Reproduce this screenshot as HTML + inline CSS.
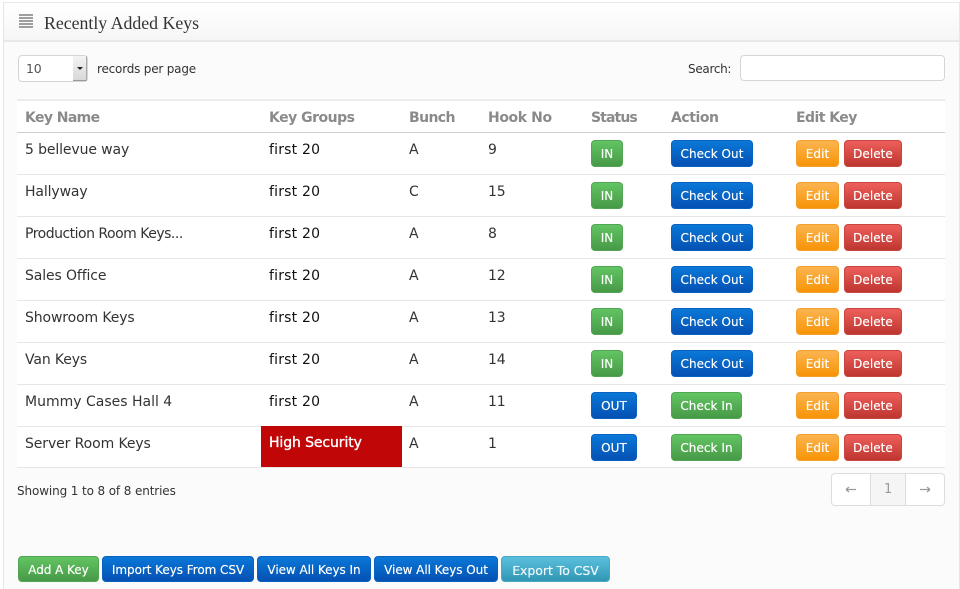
<!DOCTYPE html>
<html><head><meta charset="utf-8"><style>
*{box-sizing:border-box}
html,body{margin:0;padding:0}
body{width:960px;height:589px;overflow:hidden;background:#fff;position:relative;font-family:"DejaVu Sans","Liberation Sans",sans-serif;color:#333}
.a{position:absolute;white-space:nowrap}
.panel{left:3px;top:2px;width:957px;height:587px;background:#fbfbfb;border-left:1px solid #e6e6e6;border-right:1px solid #e6e6e6;border-top:1px solid #e8e8e8}
.head{left:4px;top:3px;width:955px;height:39px;background:linear-gradient(#fff,#f6f6f6);border-bottom:2px solid #e8e8e8}
.title{left:44px;top:12px;font:17.8px/22px "Liberation Serif",serif;color:#333}
.ico{left:19px;top:14px;width:14px;height:14px}
.tbl{left:17px;top:99px;width:928px;height:369px;background:#fff;border-top:2px solid #ececec}
.line{left:17px;width:928px;height:1px;background:#e6e6e6}
.th{top:109px;font-size:14px;line-height:18px;font-weight:bold;color:#8a8a8a;letter-spacing:-.5px}
.td{font-size:14px;line-height:18px;color:#333;letter-spacing:-.12px}
.k{color:#111;letter-spacing:.2px}
.b{height:27px;border-radius:4px;color:#fff;font-size:12px;line-height:26px;text-align:center;text-shadow:0 0 .4px #fff;letter-spacing:.05px}
.s{height:26px;line-height:27px;letter-spacing:-.05px}
.g{background:linear-gradient(#62c462,#479a47);border:1px solid #52a552}
.u{background:linear-gradient(#0a78d8,#0451b3);border:1px solid #0a62c0}
.o{background:linear-gradient(#fbb450,#f89406);border:1px solid #f2a02c}
.r{background:linear-gradient(#ee5f5b,#bd362f);border:1px solid #c9453f}
.t{background:linear-gradient(#5bc0de,#2f96b4);border:1px solid #4aa8c6}
.small{font-size:12px;line-height:16px;color:#333;letter-spacing:-.2px}
</style></head><body>
<div class="a panel"></div>
<div class="a head"></div>
<svg class="a ico" viewBox="0 0 14 14"><path d="M0 1H14M0 4H14M0 7H14M0 10H14M0 13H14" stroke="#808080" stroke-width="1.6" fill="none"/></svg>
<div class="a title">Recently Added Keys</div>

<div class="a" style="left:18px;top:55px;width:70px;height:27px;background:#fff;border:1px solid #d5d5d5;border-radius:4px"></div>
<div class="a" style="left:73px;top:56px;width:14px;height:25px;background:linear-gradient(#f4f4f4,#d8d8d8);border-right:1px solid #aaa;border-bottom:1px solid #999"></div>
<div class="a" style="left:77px;top:67px;width:0;height:0;border-left:3px solid transparent;border-right:3px solid transparent;border-top:3px solid #222"></div>
<div class="a small" style="left:26px;top:61px;color:#555;font-size:12.5px">10</div>
<div class="a small" style="left:97px;top:61px">records per page</div>
<div class="a small" style="left:688px;top:61px;letter-spacing:-.3px">Search:</div>
<div class="a" style="left:740px;top:55px;width:205px;height:26px;background:#fff;border:1px solid #d5d5d5;border-radius:4px"></div>

<div class="a tbl"></div>
<div class="a line" style="top:132px;background:#d0d0d0"></div>
<div class="a line" style="top:174px"></div>
<div class="a line" style="top:216px"></div>
<div class="a line" style="top:258px"></div>
<div class="a line" style="top:300px"></div>
<div class="a line" style="top:342px"></div>
<div class="a line" style="top:384px"></div>
<div class="a line" style="top:426px"></div>
<div class="a line" style="top:467px"></div>

<div class="a th" style="left:25px;letter-spacing:-.6px">Key Name</div>
<div class="a th" style="left:269px">Key Groups</div>
<div class="a th" style="left:409px;letter-spacing:-.6px">Bunch</div>
<div class="a th" style="left:488px;letter-spacing:-.4px">Hook No</div>
<div class="a th" style="left:591px;letter-spacing:-.9px">Status</div>
<div class="a th" style="left:671px;letter-spacing:-.45px">Action</div>
<div class="a th" style="left:796px;letter-spacing:-.55px">Edit Key</div>

<div class="a td" style="left:25px;top:141px">5 bellevue way</div><div class="a td k" style="left:269px;top:141px">first 20</div><div class="a td" style="left:409px;top:141px">A</div><div class="a td" style="left:488px;top:141px">9</div>
<div class="a b g" style="left:591px;top:140px;width:32px">IN</div><div class="a b u" style="left:671px;top:140px;width:82px">Check Out</div><div class="a b o" style="left:796px;top:140px;width:43px">Edit</div><div class="a b r" style="left:844px;top:140px;width:58px">Delete</div>

<div class="a td" style="left:25px;top:183px">Hallyway</div><div class="a td k" style="left:269px;top:183px">first 20</div><div class="a td" style="left:409px;top:183px">C</div><div class="a td" style="left:488px;top:183px">15</div>
<div class="a b g" style="left:591px;top:182px;width:32px">IN</div><div class="a b u" style="left:671px;top:182px;width:82px">Check Out</div><div class="a b o" style="left:796px;top:182px;width:43px">Edit</div><div class="a b r" style="left:844px;top:182px;width:58px">Delete</div>

<div class="a td" style="left:25px;top:225px;letter-spacing:-.5px">Production Room Keys...</div><div class="a td k" style="left:269px;top:225px">first 20</div><div class="a td" style="left:409px;top:225px">A</div><div class="a td" style="left:488px;top:225px">8</div>
<div class="a b g" style="left:591px;top:224px;width:32px">IN</div><div class="a b u" style="left:671px;top:224px;width:82px">Check Out</div><div class="a b o" style="left:796px;top:224px;width:43px">Edit</div><div class="a b r" style="left:844px;top:224px;width:58px">Delete</div>

<div class="a td" style="left:25px;top:267px">Sales Office</div><div class="a td k" style="left:269px;top:267px">first 20</div><div class="a td" style="left:409px;top:267px">A</div><div class="a td" style="left:488px;top:267px">12</div>
<div class="a b g" style="left:591px;top:266px;width:32px">IN</div><div class="a b u" style="left:671px;top:266px;width:82px">Check Out</div><div class="a b o" style="left:796px;top:266px;width:43px">Edit</div><div class="a b r" style="left:844px;top:266px;width:58px">Delete</div>

<div class="a td" style="left:25px;top:309px">Showroom Keys</div><div class="a td k" style="left:269px;top:309px">first 20</div><div class="a td" style="left:409px;top:309px">A</div><div class="a td" style="left:488px;top:309px">13</div>
<div class="a b g" style="left:591px;top:308px;width:32px">IN</div><div class="a b u" style="left:671px;top:308px;width:82px">Check Out</div><div class="a b o" style="left:796px;top:308px;width:43px">Edit</div><div class="a b r" style="left:844px;top:308px;width:58px">Delete</div>

<div class="a td" style="left:25px;top:351px">Van Keys</div><div class="a td k" style="left:269px;top:351px">first 20</div><div class="a td" style="left:409px;top:351px">A</div><div class="a td" style="left:488px;top:351px">14</div>
<div class="a b g" style="left:591px;top:350px;width:32px">IN</div><div class="a b u" style="left:671px;top:350px;width:82px">Check Out</div><div class="a b o" style="left:796px;top:350px;width:43px">Edit</div><div class="a b r" style="left:844px;top:350px;width:58px">Delete</div>

<div class="a td" style="left:25px;top:393px;letter-spacing:0">Mummy Cases Hall 4</div><div class="a td k" style="left:269px;top:393px">first 20</div><div class="a td" style="left:409px;top:393px">A</div><div class="a td" style="left:488px;top:393px">11</div>
<div class="a b u" style="left:591px;top:392px;width:46px">OUT</div><div class="a b g" style="left:671px;top:392px;width:71px">Check In</div><div class="a b o" style="left:796px;top:392px;width:43px">Edit</div><div class="a b r" style="left:844px;top:392px;width:58px">Delete</div>

<div class="a" style="left:261px;top:426px;width:141px;height:41px;background:#c00606"></div>
<div class="a td" style="left:25px;top:435px;letter-spacing:-.1px">Server Room Keys</div><div class="a td" style="left:269px;top:434px;color:#fff;-webkit-text-stroke:.35px #fff;letter-spacing:-.1px">High Security</div><div class="a td" style="left:409px;top:435px">A</div><div class="a td" style="left:488px;top:435px">1</div>
<div class="a b u" style="left:591px;top:434px;width:46px">OUT</div><div class="a b g" style="left:671px;top:434px;width:71px">Check In</div><div class="a b o" style="left:796px;top:434px;width:43px">Edit</div><div class="a b r" style="left:844px;top:434px;width:58px">Delete</div>

<div class="a small" style="left:17px;top:483px;letter-spacing:-.12px">Showing 1 to 8 of 8 entries</div>

<div class="a" style="left:831px;top:473px;width:114px;height:33px;background:#fff;border:1px solid #ddd;border-radius:4px"></div>
<div class="a" style="left:870px;top:474px;width:36px;height:31px;background:#f5f5f5;border-left:1px solid #ddd;border-right:1px solid #ddd"></div>
<svg class="a" style="left:845px;top:485px" width="12" height="9" viewBox="0 0 12 9"><path d="M1 4.5H11M1 4.5L4 2M1 4.5L4 7" stroke="#999" stroke-width="1.2" fill="none"/></svg>
<div class="a small" style="left:884px;top:482px;color:#999;font-size:13px">1</div>
<svg class="a" style="left:919px;top:485px" width="12" height="9" viewBox="0 0 12 9"><path d="M1 4.5H11M11 4.5L8 2M11 4.5L8 7" stroke="#999" stroke-width="1.2" fill="none"/></svg>

<div class="a b g s" style="left:18px;top:556px;width:81px">Add A Key</div>
<div class="a b u s" style="left:102px;top:556px;width:152px">Import Keys From CSV</div>
<div class="a b u s" style="left:257px;top:556px;width:114px">View All Keys In</div>
<div class="a b u s" style="left:374px;top:556px;width:124px">View All Keys Out</div>
<div class="a b t s" style="left:501px;top:556px;width:109px;color:#eef8fb;font-size:12.5px">Export To CSV</div>
</body></html>
